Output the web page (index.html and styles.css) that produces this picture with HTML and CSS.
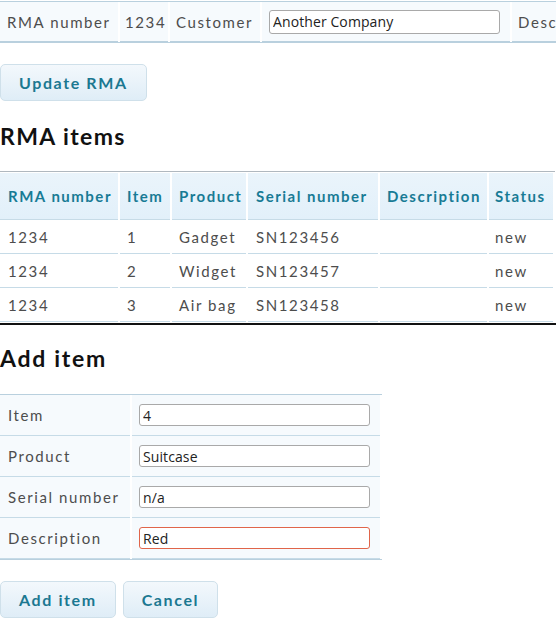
FILE: index.html
```html
<!DOCTYPE html>
<html>
<head>
<meta charset="utf-8">
<link rel="stylesheet" href="styles.css">
</head>
<body>
<div class="clip">
  <table class="grid info">
    <tr>
      <td class="c-label">RMA number</td>
      <td class="c-num">1234</td>
      <td class="c-cust">Customer</td>
      <td class="c-field"><input class="text" value="Another Company"></td>
      <td class="c-desc">Description</td>
    </tr>
  </table>
</div>
<div class="actions first"><button class="btn">Update RMA</button></div>
<h2 class="title">RMA items</h2>
<table class="grid items">
  <thead>
    <tr>
      <th class="col-rma">RMA number</th>
      <th class="col-item">Item</th>
      <th class="col-product">Product</th>
      <th class="col-serial">Serial number</th>
      <th class="col-desc">Description</th>
      <th class="col-status">Status</th>
    </tr>
  </thead>
  <tbody>
    <tr><td>1234</td><td>1</td><td>Gadget</td><td>SN123456</td><td></td><td>new</td></tr>
    <tr><td>1234</td><td>2</td><td>Widget</td><td>SN123457</td><td></td><td>new</td></tr>
    <tr><td>1234</td><td>3</td><td>Air bag</td><td>SN123458</td><td></td><td>new</td></tr>
  </tbody>
</table>
<div class="rule"></div>
<h2 class="title second">Add item</h2>
<table class="grid form">
  <tr><td class="label">Item</td><td class="field"><input class="text" value="4"></td></tr>
  <tr><td class="label">Product</td><td class="field"><input class="text" value="Suitcase"></td></tr>
  <tr><td class="label">Serial number</td><td class="field"><input class="text" value="n/a"></td></tr>
  <tr><td class="label">Description</td><td class="field"><input class="text focus" value="Red"></td></tr>
</table>
<div class="actions last"><button class="btn">Add item</button><button class="btn">Cancel</button></div>
</body>
</html>
```
FILE: styles.css
```css
html, body {
  margin: 0;
  padding: 0;
  background: #fff;
}
body {
  font-family: Lato, "DejaVu Sans", sans-serif;
  font-size: 15px;
  letter-spacing: 1.6px;
  color: #4d4d4d;
  overflow: hidden;
}
.clip {
  width: 556px;
  overflow: hidden;
  padding-top: 1px;
}
.grid {
  border-collapse: separate;
  border-spacing: 2px 0;
  margin: 0 -2px;
  table-layout: fixed;
}
.grid td, .grid th {
  box-sizing: border-box;
  text-align: left;
  font-weight: normal;
  white-space: nowrap;
  vertical-align: middle;
  overflow: hidden;
}
.info {
  border-top: 1px solid #b9d0de;
  border-bottom: 1px solid #b9d0de;
  width: 648px;
}
.info td {
  background: #f6fafd;
  height: 40px;
  padding: 0 7px 0 7px;
  border-bottom: 1px solid #b9d0de;
}
.info .c-label { width: 118px; }
.info .c-num { width: 48px; padding-left: 5px; }
.info .c-cust { width: 90px; padding-left: 6px; }
.info .c-field { width: 248px; padding: 0 10px 0 7px; }
.info .c-desc { width: 132px; padding-left: 6px; }
.info .text { height: 24px; }
.text {
  font-family: "Open Sans", "DejaVu Sans", sans-serif;
  font-size: 14px;
  letter-spacing: 0.1px;
  color: #222;
  box-sizing: border-box;
  display: block;
  height: 22px;
  width: 100%;
  padding: 0 3px;
  border: 1px solid #a9a9a9;
  border-radius: 3px;
  background: #fff;
  outline: none;
}
.text.focus {
  border-color: #e0654a;
}
.actions {
  display: flex;
  gap: 7px;
}
.actions.first {
  margin-top: 21px;
}
.btn {
  font-family: Lato, "DejaVu Sans", sans-serif;
  font-size: 16px;
  font-weight: bold;
  letter-spacing: 1.6px;
  color: #1b7891;
  height: 37px;
  padding: 0 18px;
  border: 1px solid #cfe0ea;
  border-radius: 5px;
  background: linear-gradient(#f3f8fc, #dfedf7);
  cursor: pointer;
}
.title {
  font-size: 23px;
  font-weight: bold;
  color: #111;
  letter-spacing: 1.4px;
  margin: 21px 0 21px;
  line-height: 28px;
}
.title.second {
  margin: 19px 0 22px;
  letter-spacing: 1.7px;
}
.items {
  width: 557px;
  border-top: 1px solid #b0b8bf;
  padding-top: 1px;
}
.items th {
  background: linear-gradient(#eaf4fb, #e2f0fa);
  color: #187b95;
  font-weight: bold;
  letter-spacing: 1.5px;
  height: 47px;
  padding: 0 6px 0 7px;
  border-bottom: 1px solid #c6dbe7;
}
.items .col-rma { width: 118px; padding-left: 8px; }
.items .col-item { width: 50px; }
.items .col-product { width: 74px; }
.items .col-serial { width: 130px; padding-left: 8px; }
.items .col-desc { width: 107px; }
.items .col-status { width: 64px; padding-left: 6px; }
.items td {
  height: 34px;
  padding: 0 6px 0 7px;
  border-bottom: 1px solid #c6dbe7;
  background: #fff;
}
.items td:first-child { padding-left: 8px; }
.items td:nth-child(4) { padding-left: 8px; }
.items td:last-child { padding-left: 6px; }
.rule {
  height: 0;
  border-top: 2px solid #111;
  margin-top: 1px;
}
.form {
  border-top: 1px solid #b9d0de;
  border-bottom: 1px solid #b9d0de;
  width: 384px;
}
.form td {
  background: #f6fafd;
  height: 41px;
  padding: 0 6px 0 8px;
  border-bottom: 1px solid #c6dbe7;
}
.form td.label {
  width: 130px;
}
.form td.field {
  width: 248px;
  padding: 0 10px 0 7px;
}
.actions.last {
  margin-top: 21px;
}
```
